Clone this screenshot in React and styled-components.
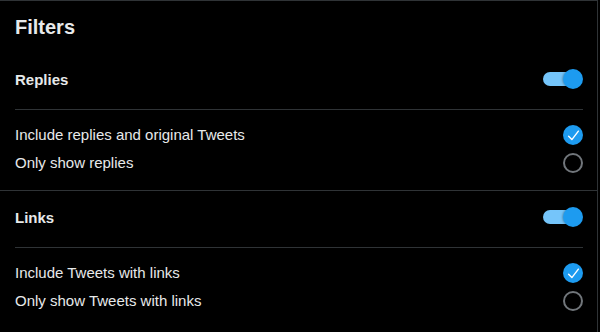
import React, { useState } from "react";
import styled, { createGlobalStyle } from "styled-components";

const Global = createGlobalStyle`
  html, body { margin: 0; padding: 0; background: #000; }
  body { font-family: "Liberation Sans", Arial, sans-serif; color: #e7e9ea; }
`;

const Panel = styled.div`
  width: 598px;
  height: 332px;
  box-sizing: border-box;
  background: #000;
  border-top: 1px solid #2f3336;
  border-right: 1px solid #2f3336;
  overflow: hidden;
`;

const Title = styled.h2`
  margin: 0;
  height: 52px;
  padding: 0 15px;
  display: flex;
  align-items: center;
  font-size: 20px;
  line-height: 24px;
  font-weight: 700;
  color: #e7e9ea;
`;

const Section = styled.section`
  border-bottom: ${(p) => (p.$last ? "none" : "1px solid #2f3336")};
`;

const Header = styled.div`
  height: 52px;
  padding: 0 14px 0 15px;
  display: flex;
  align-items: center;
  justify-content: space-between;
  font-size: 15px;
  font-weight: 700;
`;

const InnerDivider = styled.div`
  margin: 4px 14px 0 15px;
  height: 1px;
  background: #2f3336;
`;

const Options = styled.div`
  padding: 11px 14px 13px 15px;
  display: flex;
  flex-direction: column;
`;

const Option = styled.label`
  height: 28px;
  display: flex;
  align-items: center;
  justify-content: space-between;
  font-size: 15px;
  line-height: 20px;
  color: #e7e9ea;
  cursor: pointer;
`;

const Toggle = styled.button`
  position: relative;
  width: 40px;
  height: 20px;
  padding: 0;
  border: none;
  background: transparent;
  cursor: pointer;
`;

const Track = styled.span`
  position: absolute;
  left: 0;
  right: 4px;
  top: 3px;
  height: 14px;
  border-radius: 7px;
  background: ${(p) => (p.$on ? "#75c5fa" : "#6e767d")};
`;

const Thumb = styled.span`
  position: absolute;
  top: 0;
  left: ${(p) => (p.$on ? "20px" : "0")};
  width: 20px;
  height: 20px;
  border-radius: 50%;
  background: ${(p) => (p.$on ? "#1d9bf0" : "#fff")};
  box-shadow: -1px 0 2px rgba(0, 0, 0, 0.25);
`;

const Radio = styled.span`
  width: 20px;
  height: 20px;
  box-sizing: border-box;
  border-radius: 50%;
  display: flex;
  align-items: center;
  justify-content: center;
  background: ${(p) => (p.$checked ? "#1d9bf0" : "transparent")};
  border: ${(p) => (p.$checked ? "none" : "2px solid #71767b")};
`;

function Check() {
  return (
    <svg width="13" height="13" viewBox="0 0 24 24">
      <path d="M3 13.5 L9 19.5 L21 4" fill="none" stroke="#fff" strokeWidth="2.6" strokeLinecap="round" strokeLinejoin="round" />
    </svg>
  );
}

function FilterSection({ title, options, last }) {
  const [on, setOn] = useState(true);
  const [sel, setSel] = useState(0);
  return (
    <Section $last={last}>
      <Header>
        <span>{title}</span>
        <Toggle onClick={() => setOn(!on)} aria-label={title}>
          <Track $on={on} />
          <Thumb $on={on} />
        </Toggle>
      </Header>
      <InnerDivider />
      <Options>
        {options.map((o, i) => (
          <Option key={o} onClick={() => setSel(i)}>
            <span>{o}</span>
            <Radio $checked={sel === i}>{sel === i && <Check />}</Radio>
          </Option>
        ))}
      </Options>
    </Section>
  );
}

export default function App() {
  return (
    <>
      <Global />
      <Panel>
        <Title>Filters</Title>
        <FilterSection title="Replies" options={["Include replies and original Tweets", "Only show replies"]} />
        <FilterSection title="Links" options={["Include Tweets with links", "Only show Tweets with links"]} last />
      </Panel>
    </>
  );
}
